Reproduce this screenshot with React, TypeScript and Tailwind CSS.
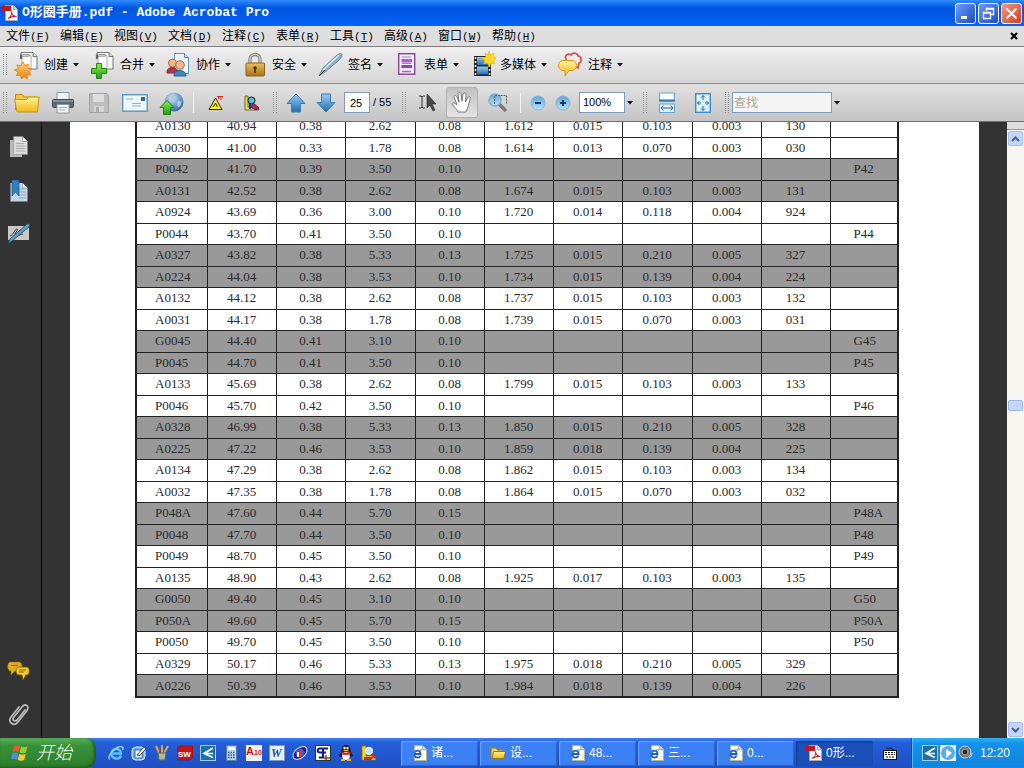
import type { ReactNode } from "react";

const rows = [
  "A0130|40.94|0.38|2.62|0.08|1.612|0.015|0.103|0.003|130|",
  "A0030|41.00|0.33|1.78|0.08|1.614|0.013|0.070|0.003|030|",
  "P0042|41.70|0.39|3.50|0.10||||||P42",
  "A0131|42.52|0.38|2.62|0.08|1.674|0.015|0.103|0.003|131|",
  "A0924|43.69|0.36|3.00|0.10|1.720|0.014|0.118|0.004|924|",
  "P0044|43.70|0.41|3.50|0.10||||||P44",
  "A0327|43.82|0.38|5.33|0.13|1.725|0.015|0.210|0.005|327|",
  "A0224|44.04|0.38|3.53|0.10|1.734|0.015|0.139|0.004|224|",
  "A0132|44.12|0.38|2.62|0.08|1.737|0.015|0.103|0.003|132|",
  "A0031|44.17|0.38|1.78|0.08|1.739|0.015|0.070|0.003|031|",
  "G0045|44.40|0.41|3.10|0.10||||||G45",
  "P0045|44.70|0.41|3.50|0.10||||||P45",
  "A0133|45.69|0.38|2.62|0.08|1.799|0.015|0.103|0.003|133|",
  "P0046|45.70|0.42|3.50|0.10||||||P46",
  "A0328|46.99|0.38|5.33|0.13|1.850|0.015|0.210|0.005|328|",
  "A0225|47.22|0.46|3.53|0.10|1.859|0.018|0.139|0.004|225|",
  "A0134|47.29|0.38|2.62|0.08|1.862|0.015|0.103|0.003|134|",
  "A0032|47.35|0.38|1.78|0.08|1.864|0.015|0.070|0.003|032|",
  "P048A|47.60|0.44|5.70|0.15||||||P48A",
  "P0048|47.70|0.44|3.50|0.10||||||P48",
  "P0049|48.70|0.45|3.50|0.10||||||P49",
  "A0135|48.90|0.43|2.62|0.08|1.925|0.017|0.103|0.003|135|",
  "G0050|49.40|0.45|3.10|0.10||||||G50",
  "P050A|49.60|0.45|5.70|0.15||||||P50A",
  "P0050|49.70|0.45|3.50|0.10||||||P50",
  "A0329|50.17|0.46|5.33|0.13|1.975|0.018|0.210|0.005|329|",
  "A0226|50.39|0.46|3.53|0.10|1.984|0.018|0.139|0.004|226|",
].map((line) => line.split("|"));

const menus = [
  ["文件", "F"],
  ["编辑", "E"],
  ["视图", "V"],
  ["文档", "D"],
  ["注释", "C"],
  ["表单", "R"],
  ["工具", "T"],
  ["高级", "A"],
  ["窗口", "W"],
  ["帮助", "H"],
];

// rows come in pairs: two white, two shaded
const isShaded = (i: number) => i % 4 === 2 || i % 4 === 3;

function Svg({ w, h, children }: { w: number; h: number; children: ReactNode }) {
  return (
    <svg width={w} height={h} viewBox={`0 0 ${w} ${h}`} fill="none" className="shrink-0" aria-hidden="true">
      {children}
    </svg>
  );
}

function Caret() {
  return (
    <Svg w={6} h={4}>
      <path d="M0 0h6L3 3.6z" fill="#111" />
    </Svg>
  );
}

function Grip() {
  return (
    <Svg w={4} h={22}>
      <path d="M.5 0v22M3.5 0v22" stroke="#8f8f8f" strokeDasharray="1 1" />
    </Svg>
  );
}

function Gradients() {
  return (
    <svg width="0" height="0" className="absolute" aria-hidden="true">
      <defs>
        <linearGradient id="blue" x1="0" y1="0" x2="0" y2="1">
          <stop offset="0" stopColor="#9ccbee" />
          <stop offset="1" stopColor="#1b6fb4" />
        </linearGradient>
        <linearGradient id="green" x1="0" y1="0" x2="0" y2="1">
          <stop offset="0" stopColor="#8cf04a" />
          <stop offset="1" stopColor="#1f9c12" />
        </linearGradient>
        <linearGradient id="gold" x1="0" y1="0" x2="0" y2="1">
          <stop offset="0" stopColor="#fff3a0" />
          <stop offset="1" stopColor="#f2b70e" />
        </linearGradient>
        <linearGradient id="orange" x1="0" y1="0" x2="0" y2="1">
          <stop offset="0" stopColor="#ffcf6b" />
          <stop offset="1" stopColor="#ee8414" />
        </linearGradient>
        <linearGradient id="brass" x1="0" y1="0" x2="0" y2="1">
          <stop offset="0" stopColor="#e8bf62" />
          <stop offset="1" stopColor="#a87316" />
        </linearGradient>
        <linearGradient id="lens" x1="0" y1="0" x2="0" y2="1">
          <stop offset="0" stopColor="#5fa6dc" />
          <stop offset="1" stopColor="#b8e4fb" />
        </linearGradient>
        <radialGradient id="globe" cx=".4" cy=".3" r=".8">
          <stop offset="0" stopColor="#d3e6f6" />
          <stop offset=".5" stopColor="#6f9fd0" />
          <stop offset="1" stopColor="#2c5c97" />
        </radialGradient>
      </defs>
    </svg>
  );
}

function PageStack() {
  return (
    <>
      <path d="M7 5V1.500h12l4 4V18H10" fill="#fbfbfb" stroke="#777" />
      <path d="M19 1.500v4h4" stroke="#777" fill="#ddd" />
      <path d="M8 5c3-2 7-2 9 0v13H8z" fill="#fff" stroke="#aaa" />
      <path d="M7 8V4.500h8.500" stroke="#666" strokeWidth="2.200" />
      <path d="M8 4.500h7" stroke="#ccc" />
    </>
  );
}

const taskIcons: { label: string; icon: ReactNode }[] = [
  {
    label: "创建",
    icon: (
      <Svg w={26} h={28}>
        <PageStack />
        <path
          d="M9 11l2 3.500 3.800-1.300-.8 4 4 .800-3.200 2.500 2.200 3.300-4 .2.300 4-3.300-2.300L7.500 28l-1-3.800-4 .6 1.600-3.700L.5 19l3.800-1.500L2.800 14l4 .6z"
          fill="url(#orange)"
          stroke="#d9750f"
          strokeWidth=".7"
        />
      </Svg>
    ),
  },
  {
    label: "合并",
    icon: (
      <Svg w={26} h={28}>
        <PageStack />
        <path d="M6.500 12.500h5v5h5v5h-5v5h-5v-5h-5v-5h5z" fill="url(#green)" stroke="#23850f" />
      </Svg>
    ),
  },
  {
    label: "协作",
    icon: (
      <Svg w={26} h={28}>
        <path d="M8.500 2.500h10l4 4v16h-14z" fill="#eaf4fc" stroke="#5e93be" />
        <path d="M18.500 2.500v4h4" stroke="#5e93be" fill="#b5d5ee" />
        <path d="M1 21c0-6 10-6 11 0v1H1z" fill="#b5324a" stroke="#8a2338" />
        <circle cx="6.500" cy="12" r="4" fill="#f0b58a" stroke="#b26a43" />
        <path d="M8 24c0-6 11-6 12 0v1H8z" fill="#3d87bd" stroke="#265f8a" />
        <circle cx="14" cy="14" r="4.300" fill="#f4b98e" stroke="#b26a43" />
      </Svg>
    ),
  },
  {
    label: "安全",
    icon: (
      <Svg w={26} h={28}>
        <path d="M8 13V8c0-6 10-6 10 0v5" stroke="#8b8b84" strokeWidth="3.400" />
        <path d="M8 13V8c0-6 10-6 10 0v5" stroke="#d6d6cf" strokeWidth="1.200" />
        <rect x="4" y="12" width="18.500" height="13" rx="1" fill="url(#brass)" stroke="#8d6216" />
        <circle cx="13" cy="17" r="1.700" fill="#4b3209" />
        <path d="M13 17v5" stroke="#4b3209" strokeWidth="1.600" />
      </Svg>
    ),
  },
  {
    label: "签名",
    icon: (
      <Svg w={26} h={28}>
        <path d="M1 25l4-8L18 5c3-3 6-3 6-1s-2 4-4 6L7 21z" fill="#8fb2c8" stroke="#64869c" />
        <path d="M5 19L21 4" stroke="#e3f0f8" strokeWidth="1.400" />
        <path d="M1 25l6-6" stroke="#333" />
      </Svg>
    ),
  },
  {
    label: "表单",
    icon: (
      <Svg w={26} h={28}>
        <rect x="4.700" y="2.700" width="16" height="20.500" fill="#f6edfa" stroke="#8c49a8" strokeWidth="1.500" />
        <path d="M8 6h9M8 12.500h9" stroke="#a77cbb" />
        <rect x="7.500" y="8" width="10.500" height="3.500" fill="#a864c4" />
        <rect x="7.500" y="14" width="10.500" height="3" fill="#8f43ae" />
        <path d="M8 20.500h9" stroke="#a864c4" strokeWidth="1.500" />
      </Svg>
    ),
  },
  {
    label: "多媒体",
    icon: (
      <Svg w={26} h={28}>
        <rect x="4" y="5" width="17" height="20" fill="#242424" />
        <rect x="7" y="6" width="11" height="8" fill="url(#blue)" />
        <rect x="7" y="15.500" width="11" height="8" fill="url(#blue)" />
        <path d="M5.500 6v18M19.500 6v18" stroke="#eee" strokeWidth="1.500" strokeDasharray="2 2" />
        <path
          d="M19 0l1.500 4L24 2l-.5 4 3 1-3 2.500L25 13l-4-.500-2 3-1.500-3.500-4 1 1.500-3.500L12 7l4-1-1-4 3 2z"
          fill="#ffd91c"
          stroke="#e9ac09"
          strokeWidth=".6"
        />
      </Svg>
    ),
  },
  {
    label: "注释",
    icon: (
      <Svg w={26} h={28}>
        <path
          d="M8 8c-2-4 3-6 5-4 2-3 7-2 7 1 4 0 4 6 1 7l-1 5-5-4H9z"
          fill="#fbeaea"
          stroke="#d84a4a"
          strokeWidth="1.600"
        />
        <path
          d="M5 9.500h9c6 0 6 10 0 10h-3L7 25v-5.500H5c-6 0-6-10 0-10z"
          fill="url(#gold)"
          stroke="#d99c10"
        />
      </Svg>
    ),
  },
];

function ArrowUp() {
  return (
    <Svg w={20} h={20}>
      <path d="M10 1l9 9.500h-4.500V19h-9v-8.500H1z" fill="url(#blue)" stroke="#3a7cb4" />
    </Svg>
  );
}

function ArrowDown() {
  return (
    <Svg w={20} h={20}>
      <path d="M10 19l9-9.500h-4.500V1h-9v8.500H1z" fill="url(#blue)" stroke="#3a7cb4" />
    </Svg>
  );
}

const fileIcons: { label: string; icon: ReactNode }[] = [
  {
    label: "打开",
    icon: (
      <Svg w={26} h={22}>
        <path d="M1.500 18V2.500h7l2 2.500h11v3" fill="#f3c746" stroke="#c08d12" />
        <path d="M3 20L.8 7.500h12L14.500 5H25l-1.500 15z" fill="url(#gold)" stroke="#c9960f" />
      </Svg>
    ),
  },
  {
    label: "打印",
    icon: (
      <Svg w={24} h={24}>
        <path d="M6 1.500h12V9H6z" fill="#eef3f7" stroke="#8b98a2" />
        <rect x="1.500" y="8.500" width="21" height="8" rx="1" fill="#5f6a73" stroke="#434b52" />
        <path d="M2 10h20" stroke="#aab3ba" />
        <path d="M6 13.500h12v8.500H6z" fill="#f6fafd" stroke="#8b98a2" />
        <path d="M8 16.500h8M8 19h6" stroke="#8fb2cc" />
      </Svg>
    ),
  },
  {
    label: "保存",
    icon: (
      <Svg w={22} h={22}>
        <path d="M1.500 1.500h17l2 2v17h-19z" fill="#bdbdbd" stroke="#a3a3a3" />
        <path d="M5 2h11v8H5z" fill="#dedede" />
        <path d="M6 14h10v6H6z" fill="#d5d5d5" />
        <path d="M8 15h3v5H8z" fill="#a9a9a9" />
      </Svg>
    ),
  },
  {
    label: "电子邮件",
    icon: (
      <Svg w={26} h={20}>
        <rect x=".7" y="1.700" width="24.500" height="16.500" fill="#eef7fd" stroke="#5b94bd" strokeWidth="1.400" />
        <rect x="19" y="4" width="4" height="4" fill="#2c669c" />
        <path d="M4 6h7M10 10.500h9M10 13h9" stroke="#86b0cf" />
      </Svg>
    ),
  },
  {
    label: "上载",
    icon: (
      <Svg w={25} h={24}>
        <circle cx="15" cy="11" r="9.500" fill="url(#globe)" />
        <path d="M12 4c3-2 6 0 4 2s2 4-1 5-4-3-3-7zM19 10c3-1 4 2 2 5s-4-2-2-5z" fill="#b4c9dc" />
        <path d="M8 9.500l7 7h-3.500v7h-7v-7H1z" fill="url(#green)" stroke="#23850f" />
      </Svg>
    ),
  },
];

function ToolButton({ label, children }: { label: string; children: ReactNode }) {
  return (
    <button aria-label={label} className="flex h-8 w-9 shrink-0 items-center justify-center">
      {children}
    </button>
  );
}

function PdfIcon() {
  return (
    <Svg w={16} h={16}>
      <path d="M3.500.5h8l4 4v11h-12z" fill="#fff" stroke="#a9a9a9" />
      <path d="M11.500.5v4h4" fill="#ddd" stroke="#a9a9a9" />
      <rect y="1" width="9" height="5" fill="#c8131c" />
      <path d="M6 13.500c3-2 4-5 3.500-7 0 3 2 5 5 5-3-.5-6 .5-8.500 2z" stroke="#d7242b" strokeWidth="1.100" />
    </Svg>
  );
}

function IePage() {
  return (
    <Svg w={16} h={16}>
      <path d="M3.500.5h8l4 4v11h-12z" fill="#fffef0" stroke="#b3b39d" />
      <path d="M11.500.5v4h4" fill="#d8d8c4" stroke="#b3b39d" />
      <path d="M9.500 10.500c-1 3-6 3-6-1.500s6-4.500 6 0H4" stroke="#1f5fc4" strokeWidth="1.800" />
      <path d="M1 13c-2-3 6-9 10-8" stroke="#3d86e0" />
    </Svg>
  );
}

function FolderIcon() {
  return (
    <Svg w={16} h={16}>
      <path d="M1 13V3h5l1.500 2H13v8z" fill="#f7d257" stroke="#9c7715" />
      <path d="M2 13.500l1.500-7h12l-1.500 7z" fill="url(#gold)" stroke="#9c7715" />
    </Svg>
  );
}

function BackArrowIcon() {
  return (
    <Svg w={16} h={16}>
      <rect x=".5" y=".5" width="15" height="15" fill="#1c6fae" stroke="#9fd0ee" />
      <path d="M13 3L4 8.500l9 4M4 8.500h9" stroke="#fff" strokeWidth="1.700" />
    </Svg>
  );
}

const quickLaunch: { label: string; icon: ReactNode }[] = [
  {
    label: "Internet Explorer",
    icon: (
      <Svg w={16} h={16}>
        <path d="M13 10.500c-1.500 4.500-9.500 4-9.500-2s9.500-6 9.500 0H5" stroke="#5cc0fa" strokeWidth="2.400" />
        <path d="M1.500 14.500C-1 10 9 0 14.500 2c1 .5.500 2 0 3" stroke="#a9e1ff" strokeWidth="1.200" />
      </Svg>
    ),
  },
  {
    label: "显示桌面",
    icon: (
      <Svg w={16} h={16}>
        <rect x="1" y="2" width="13" height="13" rx="4" fill="#5fb0ee" stroke="#e8f6ff" />
        <path d="M4 5h7v8H4z" fill="#fff" stroke="#3b6ea3" />
        <path d="M6 10l7-8 2 2-7 7z" fill="#fff" stroke="#444" />
      </Svg>
    ),
  },
  {
    label: "画图",
    icon: (
      <Svg w={16} h={16}>
        <path d="M5 8L2 1M8 8V0M10 8l4-7" stroke="#d9a84e" strokeWidth="2" />
        <path d="M6 8L5 2" stroke="#d33" strokeWidth="1.500" />
        <path d="M4 8h8l-1 7H5z" fill="#a9bb9e" stroke="#5c6b52" />
      </Svg>
    ),
  },
  {
    label: "SolidWorks",
    icon: (
      <Svg w={16} h={16}>
        <path d="M0 3l3-2h13v11l-3 3H0z" fill="#c4141a" stroke="#7d0b0f" strokeWidth=".5" />
        <text x="1" y="12" fontSize="8" fontWeight="700" fill="#fff" fontFamily="Liberation Sans">
          SW
        </text>
      </Svg>
    ),
  },
  { label: "返回", icon: <BackArrowIcon /> },
  {
    label: "计算器",
    icon: (
      <Svg w={16} h={16}>
        <rect x="3.500" y=".5" width="10" height="15" fill="#b9d0ea" stroke="#5a7ca8" />
        <rect x="5" y="2" width="7" height="3" fill="#f1f8ff" />
        <path d="M5 7.500h7M5 10h7M5 12.500h7" stroke="#3c618f" strokeWidth="1.300" strokeDasharray="1.500 1" />
      </Svg>
    ),
  },
  {
    label: "Acrobat 10",
    icon: (
      <Svg w={16} h={16}>
        <rect width="16" height="16" fill="#f5f0f0" />
        <text x="0" y="10" fontSize="11" fontWeight="700" fill="#c9141b" fontFamily="Liberation Sans">
          A
        </text>
        <text x="8" y="10" fontSize="7" fontWeight="700" fill="#c9141b" fontFamily="Liberation Sans">
          10
        </text>
      </Svg>
    ),
  },
  {
    label: "Word",
    icon: (
      <Svg w={16} h={16}>
        <rect x=".5" y=".5" width="15" height="15" fill="#e6effb" stroke="#7696c8" />
        <text x="2" y="12" fontSize="12" fontWeight="700" fontStyle="italic" fill="#27509d" fontFamily="Liberation Serif">
          W
        </text>
      </Svg>
    ),
  },
  {
    label: "播放器",
    icon: (
      <Svg w={16} h={16}>
        <ellipse cx="8" cy="8" rx="8" ry="5" transform="rotate(-40 8 8)" fill="#1a1b8c" stroke="#dfe6ff" />
        <circle cx="8" cy="8" r="4.500" fill="#3f55d8" />
        <path d="M6 7v5" stroke="#fff" strokeWidth="2" />
        <path d="M9 4v8" stroke="#e0392b" strokeWidth="2" />
      </Svg>
    ),
  },
  {
    label: "CAXA",
    icon: (
      <Svg w={16} h={16}>
        <rect x=".5" y=".5" width="15" height="15" fill="#fff" stroke="#143" />
        <path d="M13 3.500H5c-3 0-3 4 0 4h6M4 12.500h5M8 4v9" stroke="#0c1f8f" strokeWidth="2" />
        <path d="M11 10v5M9 13h6" stroke="#d2281c" strokeWidth="1.500" />
      </Svg>
    ),
  },
  {
    label: "QQ",
    icon: (
      <Svg w={16} h={16}>
        <path d="M8 0C3 0 4 5 3 7l-2 4 2 .5L8 15l5-3.500 2-.5-2-4c-1-2 0-7-5-7z" fill="#14161a" />
        <ellipse cx="8" cy="11" rx="3.800" ry="4" fill="#fff" />
        <path d="M3.500 7.500c3 2 6 2 9 0" stroke="#e02419" strokeWidth="2.200" />
        <path d="M5.500 5.500h5" stroke="#f4b213" strokeWidth="1.500" />
        <circle cx="6.500" cy="3" r="1.200" fill="#fff" />
        <circle cx="9.500" cy="3" r="1.200" fill="#fff" />
        <path d="M3 15h4M9 15h4" stroke="#f4b213" strokeWidth="2" />
      </Svg>
    ),
  },
  {
    label: "查询",
    icon: (
      <Svg w={16} h={16}>
        <path d="M1 1h4v10h9l1 4H1z" fill="#f4d321" stroke="#8d6d0c" strokeWidth=".7" />
        <path d="M3 12h10l-3 3H3z" fill="#d6241a" />
        <circle cx="8" cy="6" r="3.700" fill="#bfe6f8" stroke="#f3fbff" />
        <path d="M10.500 9l4 4" stroke="#e02419" strokeWidth="2" />
      </Svg>
    ),
  },
];

const windows = [
  { title: "诸...", icon: <IePage /> },
  { title: "设...", icon: <FolderIcon /> },
  { title: "48...", icon: <IePage /> },
  { title: "三...", icon: <IePage /> },
  { title: "0...", icon: <IePage /> },
  { title: "0形...", icon: <PdfIcon />, active: true },
];

function TitleBar() {
  return (
    <header className="flex h-[26px] shrink-0 items-center bg-linear-to-b from-[#2f8cff] via-[#0055e0] via-30% to-[#0563f8] pr-[2px] pl-[2px]">
      <PdfIcon />
      <h1 className="ml-1 flex-1 font-['Liberation_Mono','Noto_Sans_CJK_SC',monospace] text-[13px] leading-4 font-bold whitespace-pre text-white">
        O形圈手册.pdf - Adobe Acrobat Pro
      </h1>
      <div className="flex gap-[2px]">
        <button
          aria-label="最小化"
          className="flex h-[21px] w-[21px] items-center justify-center rounded-[3px] border border-white bg-linear-to-br from-[#6f9bf5] to-[#1c49c8]"
        >
          <Svg w={13} h={13}>
            <path d="M2 10.500h6" stroke="#fff" strokeWidth="3" />
          </Svg>
        </button>
        <button
          aria-label="还原"
          className="flex h-[21px] w-[21px] items-center justify-center rounded-[3px] border border-white bg-linear-to-br from-[#6f9bf5] to-[#1c49c8]"
        >
          <Svg w={13} h={13}>
            <path d="M4.500 4V1.500h7v6H9M4 2h8M1.500 5.500h7v6h-7zM1 6h8" stroke="#fff" strokeWidth="1.300" />
          </Svg>
        </button>
        <button
          aria-label="关闭"
          className="flex h-[21px] w-[21px] items-center justify-center rounded-[3px] border border-white bg-linear-to-br from-[#f0987a] to-[#cf3a12]"
        >
          <Svg w={13} h={13}>
            <path d="M1.500 1.500l10 10M11.500 1.500l-10 10" stroke="#fff" strokeWidth="2.200" />
          </Svg>
        </button>
      </div>
    </header>
  );
}

function MenuBar() {
  return (
    <nav className="flex h-[21px] shrink-0 items-center border-b border-[#7d7d7d] bg-[#dedede] pr-[6px] pl-[6px]">
      {menus.map(([name, key]) => (
        <button key={key} className="w-[54px] text-left text-xs leading-4 whitespace-nowrap text-black">
          {name}
          <span className="font-['Liberation_Mono',monospace] text-[11px]">
            (<u>{key}</u>)
          </span>
        </button>
      ))}
      <button aria-label="关闭文档" className="ml-auto">
        <Svg w={8} h={8}>
          <path d="M1 1l6 6M7 1L1 7" stroke="#000" strokeWidth="2" />
        </Svg>
      </button>
    </nav>
  );
}

function TaskToolbar() {
  return (
    <div className="flex h-[37px] shrink-0 items-center border-b border-[#8a8a8a] bg-linear-to-b from-[#efefef] to-[#d6d6d6] pl-[3px]">
      <Grip />
      <div className="ml-[7px] flex gap-[11px]">
        {taskIcons.map((item) => (
          <button key={item.label} className="flex items-center text-xs leading-4 whitespace-nowrap text-black">
            {item.icon}
            <span className="mr-[5px] ml-1">{item.label}</span>
            <Caret />
          </button>
        ))}
      </div>
    </div>
  );
}

function ViewToolbar() {
  return (
    <div className="flex h-[38px] shrink-0 items-center border-b border-[#6f6f6f] bg-linear-to-b from-[#e2e2e2] to-[#c4c4c4] pl-[3px] font-['Liberation_Sans','Noto_Sans_CJK_SC',sans-serif] text-[11px] text-black">
      <Grip />
      <div className="ml-[2px] flex">
        {fileIcons.map((item) => (
          <ToolButton key={item.label} label={item.label}>
            {item.icon}
          </ToolButton>
        ))}
      </div>
      <div className="mr-1 ml-1 h-5 w-px bg-[#f4f4f4]" />
      <ToolButton label="警告">
        <Svg w={16} h={16}>
          <path d="M1 14.500L7.500 3l6.500 11.500z" fill="#fff21c" stroke="#222" />
          <path d="M5 12l2.500-4 2 4" stroke="#222" />
          <path d="M9 1.500h6M10.500 1v3M13 1v4" stroke="#e0241c" />
        </Svg>
      </ToolButton>
      <ToolButton label="查询">
        <Svg w={16} h={16}>
          <path d="M1 1h3v11h10l1 3H1z" fill="#f7e01e" stroke="#333" strokeWidth=".7" />
          <circle cx="7.500" cy="5.500" r="3.500" fill="#4fc4dc" stroke="#111" />
          <path d="M9 8l6 5-3 2-5-3z" fill="#d6241a" stroke="#38157a" />
          <path d="M6 9v5" stroke="#1a2cb4" strokeWidth="2" />
        </Svg>
      </ToolButton>
      <div className="ml-[3px]">
        <Grip />
      </div>
      <div className="ml-1 flex">
        <button aria-label="上一页" className="flex h-8 w-[30px] items-center justify-center">
          <ArrowUp />
        </button>
        <button aria-label="下一页" className="flex h-8 w-[30px] items-center justify-center">
          <ArrowDown />
        </button>
      </div>
      <input
        aria-label="页码"
        defaultValue="25"
        className="ml-[3px] h-[21px] w-[26px] border border-[#7f9db9] bg-white pl-[5px] outline-none"
      />
      <span className="ml-[3px] w-[26px] whitespace-nowrap">/ 55</span>
      <div className="ml-[3px]">
        <Grip />
      </div>
      <div className="ml-1">
        <ToolButton label="选择工具">
          <Svg w={20} h={20}>
            <path d="M1 3h2l1 1 1-1h2M1 15h2l1-1 1 1h2M4 4v10" stroke="#333" />
            <path d="M9 1v14l3-3 3 6 2-1-3-6h4z" fill="#4a4a4a" stroke="#222" strokeWidth=".6" />
          </Svg>
        </ToolButton>
      </div>
      <button
        aria-label="手形工具"
        className="flex h-[31px] w-8 shrink-0 items-center justify-center rounded-[3px] border border-[#b0b0b0] bg-linear-to-b from-[#c2c2c2] to-[#e4e4e4]"
      >
        <Svg w={22} h={22}>
          <path
            d="M7 20c-1-3-4-5-6-8 1-2 3-1 5 1L3 5c0-2 2-2 3 0l2 5-1-8c0-2 2-2 3 0l1 7 1-7c1-2 3-1 3 1l-.5 7 2.500-5c1-1 3 0 2 2l-2 8-2 5z"
            fill="#fff"
            stroke="#6c6c6c"
            strokeWidth=".9"
          />
        </Svg>
      </button>
      <button aria-label="选框缩放" className="ml-[2px] flex h-8 w-9 items-center justify-center">
        <Svg w={22} h={22}>
          <path d="M7.500 3.500h12v8" stroke="#555" strokeDasharray="2 1" />
          <path d="M12 12l7 7" stroke="#777" strokeWidth="3.500" />
          <circle cx="8" cy="8" r="6" fill="url(#lens)" stroke="#8aa9c0" strokeWidth="1.500" />
          <path d="M7.500 12V3.500H14" stroke="#567" strokeDasharray="2 1" />
        </Svg>
      </button>
      <div className="mr-1 ml-1 h-5 w-px bg-[#f4f4f4]" />
      <div className="flex">
        <button aria-label="缩小" className="flex h-8 w-[25px] items-center justify-center">
          <Svg w={16} h={16}>
            <circle cx="8" cy="8" r="7" fill="url(#lens)" stroke="#8fb4d0" />
            <path d="M5 8h6" stroke="#0e3f70" strokeWidth="2" />
          </Svg>
        </button>
        <button aria-label="放大" className="flex h-8 w-[25px] items-center justify-center">
          <Svg w={16} h={16}>
            <circle cx="8" cy="8" r="7" fill="url(#lens)" stroke="#8fb4d0" />
            <path d="M5 8h6M8 5v6" stroke="#0e3f70" strokeWidth="2" />
          </Svg>
        </button>
      </div>
      <select
        aria-label="缩放比例"
        defaultValue="100%"
        className="ml-1 h-[21px] w-[46px] appearance-none border border-[#7f9db9] bg-white pl-[3px] outline-none"
      >
        <option>50%</option>
        <option>100%</option>
        <option>200%</option>
      </select>
      <div className="ml-[2px]">
        <Caret />
      </div>
      <div className="ml-[10px]">
        <Grip />
      </div>
      <div className="ml-[2px] flex">
        <ToolButton label="适合宽度">
          <Svg w={16} h={22}>
            <path d="M.5 1h15v8H.5z" fill="#f7fcff" stroke="#69a1c8" />
            <path d="M0 8.500h16" stroke="#2e78ae" strokeWidth="2" />
            <path d="M.5 12h15v8.500H.5z" fill="#e3f2fc" stroke="#69a1c8" />
            <path d="M2 16h12M4.500 13.500L2 16l2.500 2.500M11.500 13.500L14 16l-2.500 2.500" stroke="#24689c" />
          </Svg>
        </ToolButton>
        <ToolButton label="适合页面">
          <Svg w={16} h={20}>
            <rect x=".7" y=".7" width="14.600" height="18.600" fill="#dcf0fc" stroke="#3f8cc2" strokeWidth="1.400" />
            <path
              d="M8 2.500V7M6 4.500l2-2 2 2M8 17.500V13M6 15.500l2 2 2-2M2.500 10H6M4.500 8l-2 2 2 2M13.500 10H10M11.500 8l2 2-2 2"
              stroke="#24689c"
            />
          </Svg>
        </ToolButton>
      </div>
      <div className="ml-1">
        <Grip />
      </div>
      <input
        aria-label="查找"
        placeholder="查找"
        className="ml-[3px] h-[21px] w-[100px] border border-[#7f9db9] bg-[#f5f5f5] pl-[1px] text-xs outline-none placeholder:text-[#a5a596]"
      />
      <div className="ml-[2px]">
        <Caret />
      </div>
    </div>
  );
}

function Sidebar() {
  return (
    <aside className="flex w-[42px] shrink-0 flex-col items-center border-r border-black bg-[#333] pt-[14px] pr-1 pb-[12px]">
      <button aria-label="页面">
        <Svg w={20} h={22}>
          <path d="M1 4h12v17H1z" fill="#b9b9b9" />
          <path d="M4.500.5h9l5 5v13h-14z" fill="#dcdcdc" stroke="#888" strokeWidth=".6" />
          <path d="M13.500.5v5h5" fill="#f4f4f4" stroke="#777" strokeWidth=".6" />
          <path d="M7 7.500h8M7 10h9M7 12.500h9M7 15h9" stroke="#a9a9a9" />
        </Svg>
      </button>
      <button aria-label="书签" className="mt-[22px]">
        <Svg w={20} h={22}>
          <path d="M1.500 3h12l5 5v13.500h-17z" fill="#c3d6e6" />
          <path d="M13.500 3v5h5" fill="#eef6fc" stroke="#789" strokeWidth=".6" />
          <path d="M10 9h6M10 12h7M10 15h7M10 18h7" stroke="#90a9bd" />
          <path d="M3 0h7v16l-3.500-4L3 16z" fill="#2e82bd" stroke="#1e5c8c" strokeWidth=".7" />
        </Svg>
      </button>
      <button aria-label="签名" className="mt-[21px]">
        <Svg w={24} h={22}>
          <rect x="1" y="3" width="21" height="14" fill="#c9c9c2" />
          <path d="M3 13c4-1 5-8 7-7s-4 5-1 6 5-1 7-1" stroke="#333" />
          <path d="M1 21l2-5L20 1c3-1 3 1 2 3L5 18z" fill="#5f9cc6" stroke="#1f425b" strokeWidth=".8" />
        </Svg>
      </button>
      <button aria-label="注释" className="mt-auto">
        <Svg w={24} h={20}>
          <path d="M3 1h9c4 0 4 9 0 9H8l-4 4v-4H3C0 10 0 1 3 1z" fill="#e0ad1d" stroke="#8b6910" strokeWidth=".6" />
          <path d="M12 6h8c3 0 3 8 0 8h-1l-3 5-1-5h-3c-4 0-4-8 0-8z" fill="#f3c733" stroke="#6f5309" strokeWidth=".8" />
          <path d="M4 4.500h7M12 9h7M12 11h5" stroke="#8b6910" />
        </Svg>
      </button>
      <button aria-label="附件" className="mt-[21px]">
        <Svg w={22} h={24}>
          <path
            d="M17 8l-8 10c-2 2-5 0-3.500-2.500L14 5c3-4 8-1 5 3.500L10 20c-4 5-11 0-7-5L11 5"
            stroke="#b8b8b8"
            strokeWidth="1.800"
            strokeLinecap="round"
          />
        </Svg>
      </button>
    </aside>
  );
}

function SizeTable() {
  return (
    <table className="h-[584px] w-full shrink-0 table-fixed border-collapse border-2 border-[#222] font-['Liberation_Serif',serif] text-[13px] leading-4 text-[#2a2a2a]">
      <colgroup>
        <col className="w-[71px]" />
        <col className="w-[69px]" />
        <col className="w-[69px]" />
        <col className="w-[70px]" />
        <col className="w-[69px]" />
        <col className="w-[69px]" />
        <col className="w-[69px]" />
        <col className="w-[70px]" />
        <col className="w-[69px]" />
        <col className="w-[69px]" />
        <col />
      </colgroup>
      <tbody>
        {rows.map((cells, i) => (
          <tr key={cells[0]} className={isShaded(i) ? "bg-[#999]" : "bg-white"}>
            {cells.map((cell, j) => (
              <td
                key={j}
                className={
                  j === 0
                    ? "border border-[#222] p-0 pl-[18px] text-left"
                    : j === 10
                      ? "border border-[#222] p-0 pl-[23px] text-left"
                      : "border border-[#222] p-0 text-center"
                }
              >
                {cell}
              </td>
            ))}
          </tr>
        ))}
      </tbody>
    </table>
  );
}

function ScrollBar() {
  return (
    <div className="flex w-[17px] shrink-0 flex-col bg-[#f7f6f1]">
      <div className="h-2 border-b border-[#999] bg-[#dcdcdc]" />
      <button
        aria-label="向上滚动"
        className="m-px flex h-[15px] items-center justify-center rounded-[2px] border border-[#a9bdf0] bg-[#c6d6fb]"
      >
        <Svg w={9} h={6}>
          <path d="M1 5l3.500-3.500L8 5" stroke="#4d6185" strokeWidth="2" />
        </Svg>
      </button>
      <div className="flex flex-1 flex-col">
        <div className="grow-[254]" />
        <div className="mx-px h-[11px] rounded-[2px] border border-[#a0b5ec] bg-[#c6d6fb]" />
        <div className="grow-[311]" />
      </div>
      <button
        aria-label="向下滚动"
        className="m-px flex h-[15px] items-center justify-center rounded-[2px] border border-[#a9bdf0] bg-[#c6d6fb]"
      >
        <Svg w={9} h={6}>
          <path d="M1 1l3.500 3.500L8 1" stroke="#4d6185" strokeWidth="2" />
        </Svg>
      </button>
    </div>
  );
}

function Taskbar() {
  return (
    <footer className="flex h-[30px] shrink-0 items-stretch bg-linear-to-b from-[#3a80f3] via-[#245edb] via-15% to-[#1f4fc0] text-xs text-white">
      <button className="flex w-24 shrink-0 items-center rounded-r-[10px] bg-linear-to-b from-[#5eb05c] via-[#389238] via-25% to-[#2d7d2c] pl-[11px] shadow-[inset_-2px_-1px_3px_#1c5a1c]">
        <Svg w={19} h={18}>
          <path d="M3 2c2-1 4-1 6 0L7.500 8c-2-1-4-1-6 0z" fill="#ee5a24" />
          <path d="M10 2.500c2 1 4 1 6.500 0L15 8.500c-2 1-4 1-6.500 0z" fill="#8ed12f" />
          <path d="M1.300 9.500c2-1 4-1 6 0L6 15.500c-2-1-4-1-6 0z" fill="#4a8df0" />
          <path d="M8.200 10c2 1 4 1 6.500 0l-1.500 6c-2 1-4 1-6.500 0z" fill="#fdc82a" />
        </Svg>
        <span className="ml-[6px] text-lg leading-6 font-light whitespace-nowrap italic">开始</span>
      </button>
      <div className="ml-3 flex gap-[7px]">
        {quickLaunch.map((item) => (
          <button key={item.label} aria-label={item.label}>
            {item.icon}
          </button>
        ))}
      </div>
      <div className="mr-1 ml-6 flex min-w-0 flex-1 items-center gap-[2px]">
        {windows.map((win) => (
          <button
            key={win.title}
            className={
              win.active
                ? "flex h-[25px] w-[77px] items-center rounded-[2px] bg-[#1c50b8] pl-[10px] shadow-[inset_1px_1px_2px_#123a8c]"
                : "flex h-[25px] w-[77px] items-center rounded-[2px] bg-[#3c81f3] pl-[10px] shadow-[inset_1px_1px_1px_#6ea5fb,inset_-1px_-1px_1px_#2b62cf]"
            }
          >
            {win.icon}
            <span className="ml-1 whitespace-nowrap">{win.title}</span>
          </button>
        ))}
        <button aria-label="输入法" className="ml-2">
          <Svg w={14} h={14}>
            <path d="M3 1c2 3 5-1 7 3" stroke="#111" />
            <rect x=".5" y="4.500" width="13" height="9" fill="#fff" stroke="#111" />
            <path d="M2 6.500h10M2 8.500h10M3 11h8" stroke="#111" strokeDasharray="2 1" />
          </Svg>
        </button>
      </div>
      <div className="flex w-[113px] shrink-0 items-center gap-[2px] border-l border-[#0b4fb0] bg-linear-to-b from-[#2bb0f5] via-[#1391ea] via-20% to-[#0f86de] pl-[10px] shadow-[inset_1px_0_1px_#4cc4fa]">
        <BackArrowIcon />
        <Svg w={16} h={16}>
          <path d="M0 0h16v16H0z" fill="#e9f6ff" />
          <circle cx="8" cy="8" r="7" fill="#55aef0" />
          <path d="M6 4l6 4-6 5z" fill="#fff" />
        </Svg>
        <Svg w={16} h={16}>
          <circle cx="7" cy="7" r="6" fill="#777" stroke="#ccc" />
          <circle cx="7" cy="7" r="2.800" fill="#222" stroke="#ddd" strokeWidth=".6" />
          <path d="M11 13c2-1 3-3 3-5" stroke="#dfe9f0" />
        </Svg>
        <span className="ml-1">12:20</span>
      </div>
    </footer>
  );
}

export default function App() {
  return (
    <div className="flex h-screen flex-col overflow-hidden bg-[#333] font-['Liberation_Sans','Noto_Sans_CJK_SC',sans-serif]">
      <Gradients />
      <TitleBar />
      <MenuBar />
      <TaskToolbar />
      <ViewToolbar />
      <div className="flex min-h-0 flex-1">
        <Sidebar />
        <main className="flex min-w-0 flex-1 justify-center overflow-hidden bg-[#333] px-7">
          <div className="flex w-full flex-col justify-end bg-white pr-[80px] pb-10 pl-[65px]">
            <SizeTable />
          </div>
        </main>
        <ScrollBar />
      </div>
      <Taskbar />
    </div>
  );
}
